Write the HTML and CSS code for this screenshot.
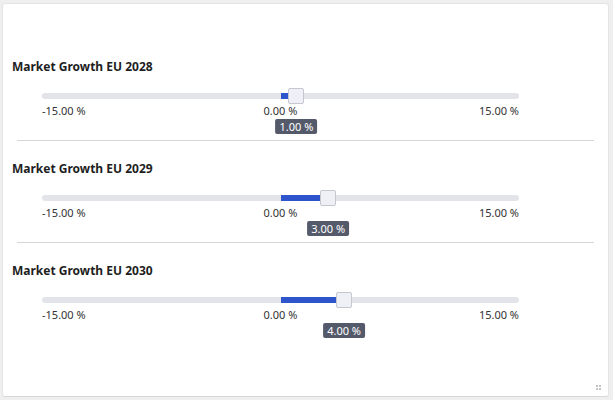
FILE: index.html
```html
<!DOCTYPE HTML>
<html>
<head>
  <meta http-equiv="Content-Type" content="text/html; charset=UTF-8">
  <title>Market Growth</title>
  <link rel="stylesheet" href="styles.css">
</head>
<body>
  <div class="card">
    <div class="param">
      <div class="param-title">Market Growth EU 2028</div>
      <div class="slider">
        <div class="track">
          <div class="fill" style="width: 3.333%"></div>
          <div class="thumb" style="left: 53.333%"></div>
        </div>
        <div class="scale"><span>-15.00 %</span><span>0.00 %</span><span class="max">15.00 %</span></div>
        <div class="value-row"><span class="value" style="left: 53.333%">1.00 %</span></div>
      </div>
    </div>
    <hr class="divider">
    <div class="param">
      <div class="param-title">Market Growth EU 2029</div>
      <div class="slider">
        <div class="track">
          <div class="fill" style="width: 10%"></div>
          <div class="thumb" style="left: 60%"></div>
        </div>
        <div class="scale"><span>-15.00 %</span><span>0.00 %</span><span class="max">15.00 %</span></div>
        <div class="value-row"><span class="value" style="left: 60%">3.00 %</span></div>
      </div>
    </div>
    <hr class="divider">
    <div class="param">
      <div class="param-title">Market Growth EU 2030</div>
      <div class="slider">
        <div class="track">
          <div class="fill" style="width: 13.333%"></div>
          <div class="thumb" style="left: 63.333%"></div>
        </div>
        <div class="scale"><span>-15.00 %</span><span>0.00 %</span><span class="max">15.00 %</span></div>
        <div class="value-row"><span class="value" style="left: 63.333%">4.00 %</span></div>
      </div>
    </div>
    <div class="grip"><i></i><i></i><i></i><i></i></div>
  </div>
</body>
</html>
```

FILE: styles.css
```css
body, html {
    margin: 0;
    padding: 0;
    background-color: #efeff0;
    font-family: "Noto Sans", sans-serif;
    color: #333;
}

body {
    padding: 3px 4px 3px 2px;
}

.card {
    position: relative;
    box-sizing: border-box;
    width: 607px;
    height: 394px;
    padding-top: 35px;
    background-color: #fff;
    border: 1px solid #e4e4e6;
    border-bottom-color: #d8d8da;
    border-radius: 3px;
}

.param {
    padding: 20px 9px 6px 9px;
}

.param-title {
    font-size: 12px;
    line-height: 16px;
    font-weight: bold;
    color: #1e1e22;
}

.slider {
    width: 477px;
    margin: 13px 0 0 30px;
}

.track {
    position: relative;
    height: 16px;
}

.track::before {
    content: "";
    position: absolute;
    left: 0;
    right: 0;
    top: 5px;
    height: 6px;
    border-radius: 3px;
    background-color: #e3e4ea;
}

.fill {
    position: absolute;
    left: 50%;
    top: 5px;
    height: 6px;
    background-color: #2f55cc;
}

.thumb {
    position: absolute;
    top: 0;
    width: 16px;
    height: 16px;
    box-sizing: border-box;
    margin-left: -8px;
    background-color: #eef0f6;
    border: 1px solid #c4c7d0;
    border-radius: 2px;
}

.scale {
    display: grid;
    grid-template-columns: 1fr auto 1fr;
    font-size: 11px;
    line-height: 14px;
    color: #333;
}

.scale .max {
    text-align: right;
}

.value-row {
    position: relative;
    height: 15px;
    margin-top: 1px;
}

.value {
    position: absolute;
    top: 0;
    transform: translateX(-50%);
    padding: 0 4px;
    font-size: 11px;
    line-height: 15px;
    white-space: nowrap;
    color: #fff;
    background-color: #555a6b;
    border-radius: 2px;
}

.divider {
    margin: 0 14px;
    border: 0;
    border-top: 1px solid #d6d6d8;
}

.grip {
    position: absolute;
    right: 7px;
    bottom: 6px;
    display: grid;
    grid-template-columns: 2px 2px;
    gap: 1px;
}

.grip i {
    width: 2px;
    height: 2px;
    background-color: #c4c4c4;
}
```
